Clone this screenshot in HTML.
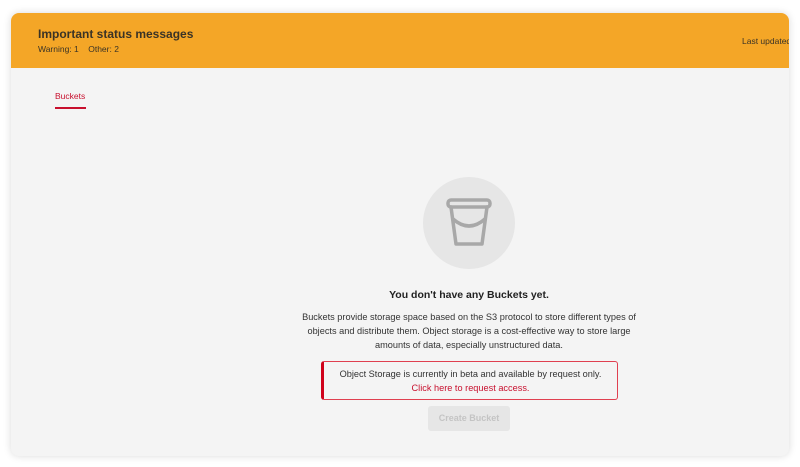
<!DOCTYPE html>
<html><head><style>
body{margin:0;width:800px;height:467px;background:#fff;font-family:"Liberation Sans",sans-serif;overflow:hidden;position:relative}
.card{position:absolute;left:11px;top:13px;width:778px;height:443px;background:#f4f4f4;border-radius:8px;overflow:hidden;box-shadow:0 0 8px rgba(0,0,0,.15)}
.hd{position:absolute;left:0;top:0;width:100%;height:55px;background:#f4a627}
.t{position:absolute;left:27px;top:14px;font-size:12px;font-weight:bold;color:#3a3326}
.s{position:absolute;left:27px;top:31px;font-size:8.5px;color:#3a3326}
.lu{position:absolute;left:731px;top:23px;font-size:8.5px;color:#3a3326;white-space:nowrap}
.tab{position:absolute;left:44px;top:78px;font-size:8.5px;color:#c8102e}
.tabl{position:absolute;left:44px;top:94px;width:31px;height:1.5px;background:#c8102e}
.c{position:absolute;left:412px;top:164px;width:92px;height:92px;border-radius:50%;background:#e6e6e6}
.h{position:absolute;left:308px;width:300px;text-align:center;top:276px;font-size:10.5px;font-weight:bold;color:#222}
.p{position:absolute;left:283px;width:350px;text-align:center;top:297px;font-size:9.2px;line-height:14px;color:#333}
.al{position:absolute;left:310px;top:348px;width:297px;height:39px;border:1px solid #e04050;border-left:3px solid #d0021b;border-radius:3px;text-align:center;font-size:9.2px;line-height:14px;color:#333;padding-top:5px;box-sizing:border-box}
.al span{color:#c8102e}
.b{position:absolute;left:417px;top:393px;width:82px;height:25px;background:#e6e6e6;border-radius:3px;color:#c4c4c4;font-size:9px;font-weight:bold;text-align:center;line-height:25px}
</style></head><body>
<div class="card">
<div class="hd"><div class="t">Important status messages</div><div class="s">Warning:&nbsp;1&nbsp;&nbsp;&nbsp;&nbsp;Other:&nbsp;2</div><div class="lu">Last updated</div></div>
<div class="tab">Buckets</div><div class="tabl"></div>
<div class="c"><svg width="92" height="92" viewBox="0 0 92 92"><g fill="none" stroke="#a8a8a8" stroke-width="3.5" stroke-linejoin="round" stroke-linecap="round"><rect x="25" y="23" width="42" height="7" rx="3"/><path d="M28 30 L33 67 H59 L64 30"/><path d="M30 42 Q46 56 62 42"/></g></svg></div>
<div class="h">You don't have any Buckets yet.</div>
<div class="p">Buckets provide storage space based on the S3 protocol to store different types of objects and distribute them. Object storage is a cost-effective way to store large amounts of data, especially unstructured data.</div>
<div class="al">Object Storage is currently in beta and available by request only.<br><span>Click here to request access.</span></div>
<div class="b">Create Bucket</div>
</div>
</body></html>
